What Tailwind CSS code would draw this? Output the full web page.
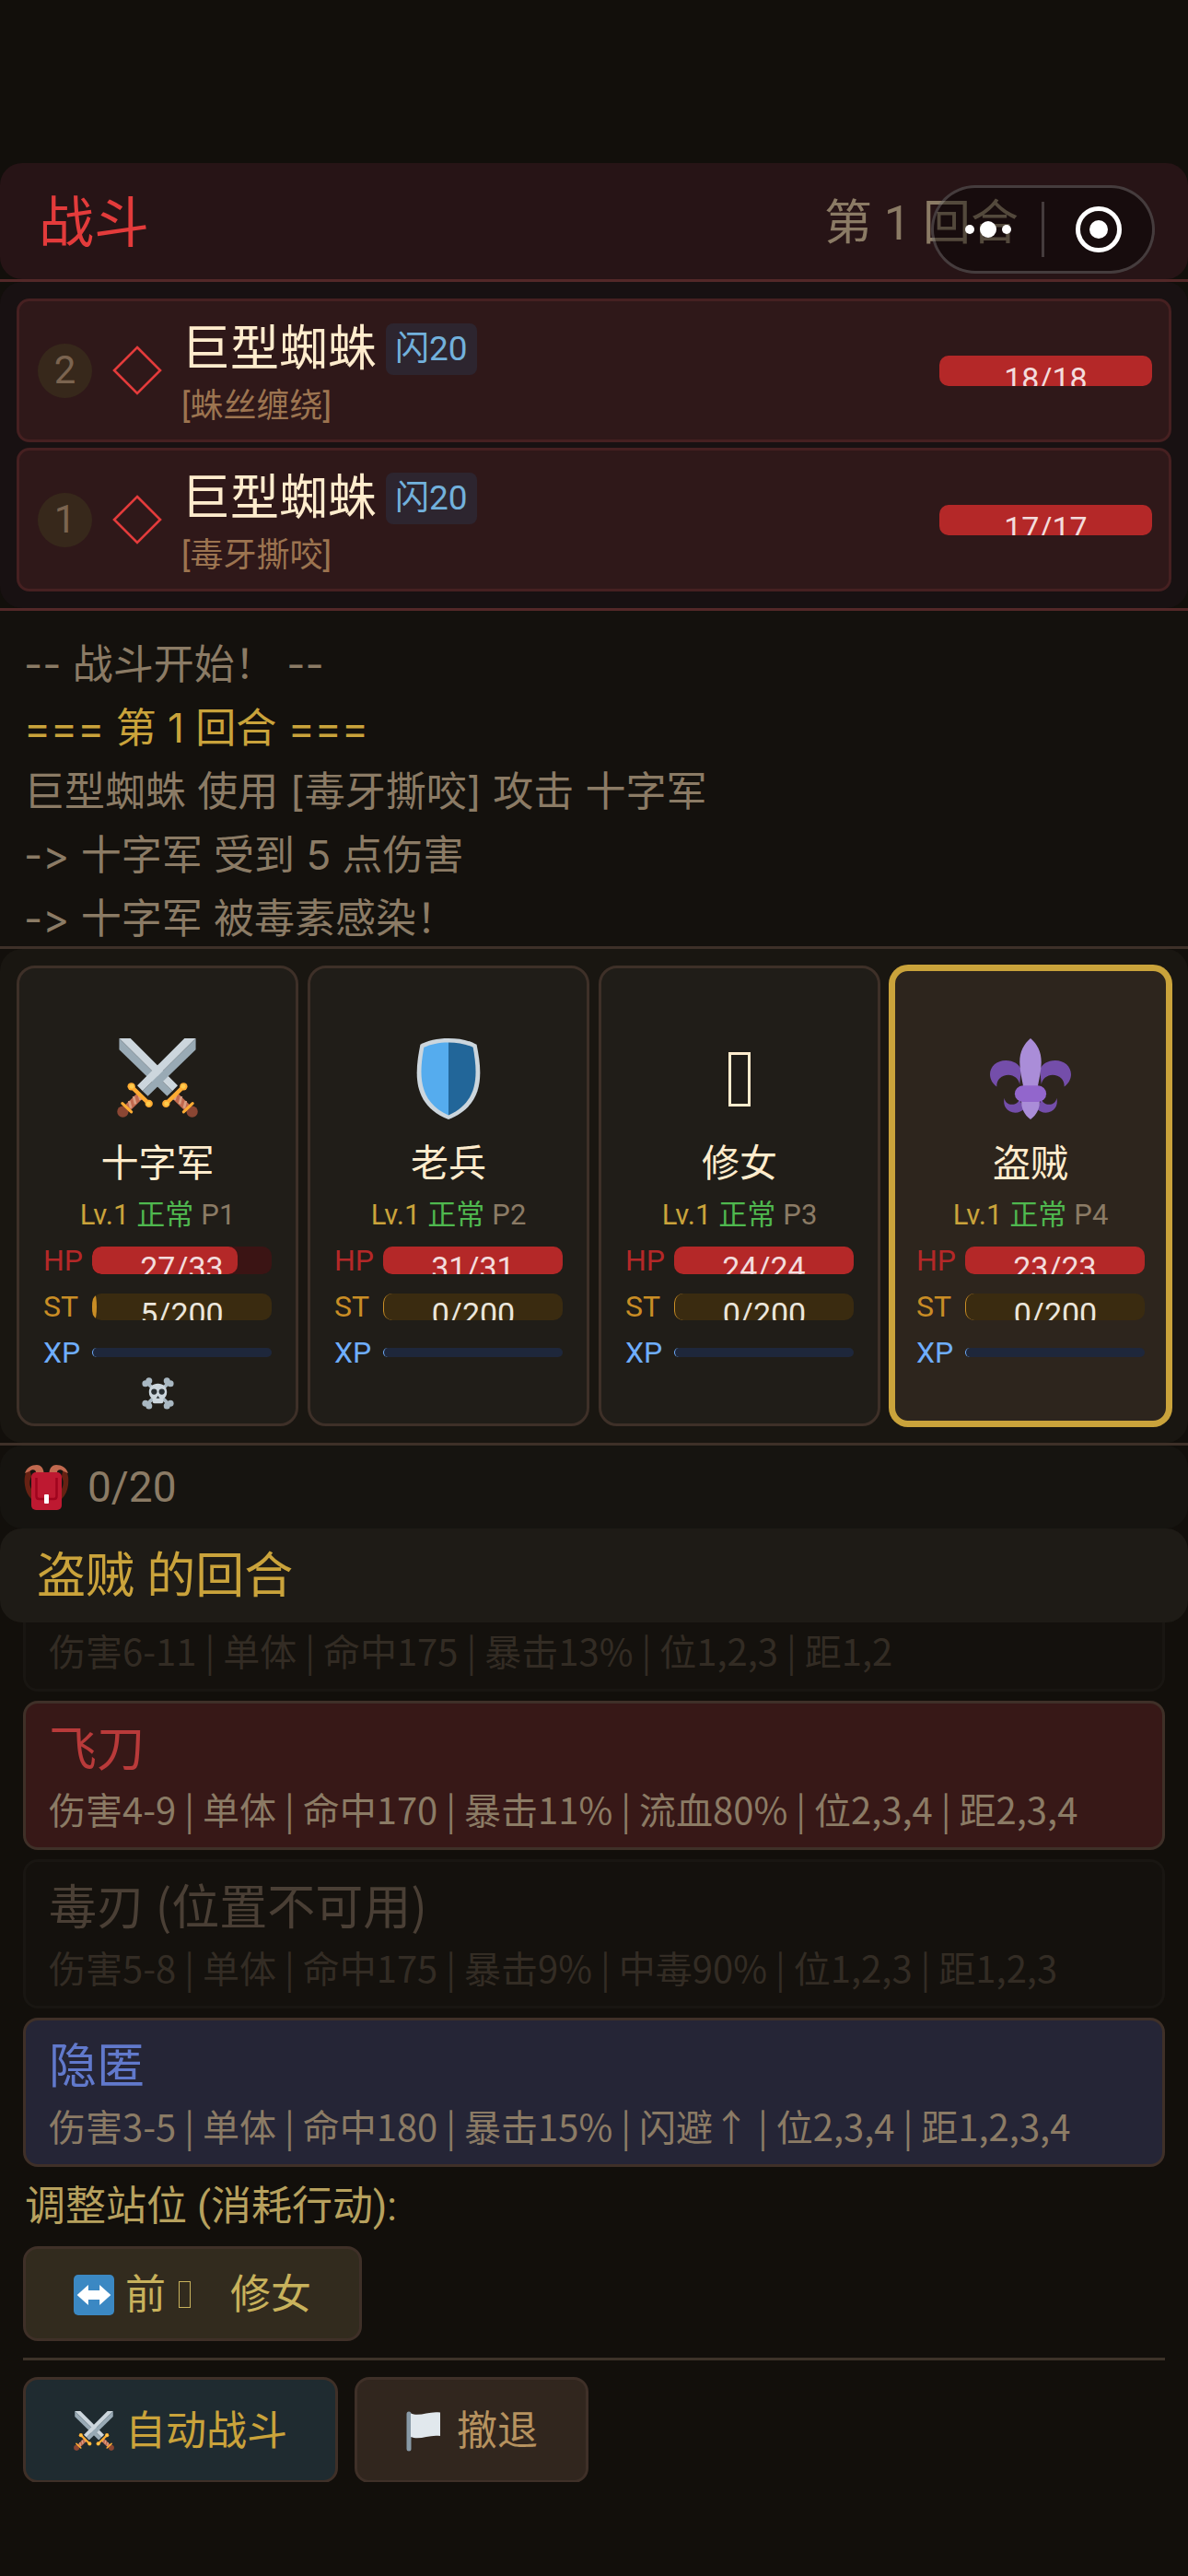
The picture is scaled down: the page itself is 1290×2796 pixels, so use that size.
<!DOCTYPE html>
<html lang="zh-CN">
<head>
    <meta charset="UTF-8">
    <meta name="viewport" content="width=device-width, initial-scale=1.0">
    <title>战斗</title>
    <!-- Tailwind CSS -->
    <script src="https://cdn.jsdelivr.net/npm/@tailwindcss/browser@4"></script>
    <style>
        body { font-family: Roboto, 'Noto Sans CJK SC', sans-serif; }
        .log { font-family: Inter, 'Noto Sans CJK SC', sans-serif; font-variant-ligatures: none; }
        .skill { font-family: 'Noto Sans CJK SC', sans-serif; }
    </style>
</head>
<body class="bg-[#120f0b] text-[#8b7b65]">

    <!-- 图标 -->
    <svg class="hidden">
        <defs>
            <g id="sword">
                <path fill="#ccd6dd" d="M30 0h5L11.4 23.4 9 21z"/>
                <path fill="#99aab5" d="M35 0v5L13.7 25.7 11.4 23.4z"/>
                <path stroke="#c1694f" stroke-width="3.4" d="M10.6 25.2 4.2 31.4"/>
                <path stroke="#d99e82" stroke-width="1.1" d="M9.6 24.2l.8 3.2M7.4 25.8l.8 3.4M5.4 27.8l.8 3.2"/>
                <circle cx="2.6" cy="32.6" r="2.5" fill="#8a4633"/>
                <path stroke="#ffac33" stroke-width="1.3" stroke-linecap="round" d="M2.4 28.9l4 3.8"/>
                <path stroke="#ffac33" stroke-width="1.8" d="M6.4 21.4l7.8 7.6"/>
                <circle cx="6.4" cy="21.4" r="1.7" fill="#ffac33"/>
                <circle cx="14.2" cy="29" r="1.7" fill="#ffac33"/>
                <circle cx="6.6" cy="21.4" r="1" fill="#ffcc4d"/>
                <circle cx="14" cy="29" r="1" fill="#ffcc4d"/>
            </g>
            <symbol id="swords" viewBox="0 0 36 36">
                <use href="#sword" transform="matrix(-1 0 0 1 36 0)"/>
                <use href="#sword"/>
            </symbol>
        </defs>
    </svg>

    <div class="h-screen flex flex-col pt-[177px] pb-[102px] overflow-hidden">

        <!-- 标题栏 -->
        <header class="relative shrink-0 border-b-[3px] border-[#532828]">
            <div class="h-[126px] rounded-3xl bg-[#271416] flex items-center justify-between pt-[6px] pl-[42px] pr-[184px]">
                <h1 class="text-[60px] leading-none text-[#e33b3b]">战斗</h1>
                <span class="text-[52px] leading-none">第 1 回合</span>
            </div>
            <!-- 小程序胶囊按钮 -->
            <div class="absolute top-6 right-9 w-[243px] h-24 rounded-full border-[3px] border-white/20 bg-black/40 flex items-center">
                <button class="flex-1 flex justify-center" aria-label="更多">
                    <svg class="w-[50px] h-[18px]" viewBox="0 0 50 18" fill="#fff">
                        <circle cx="5" cy="9" r="5"/><circle cx="25" cy="9" r="9"/><circle cx="45" cy="9" r="5"/>
                    </svg>
                </button>
                <span class="w-[3px] h-[60px] bg-white/20"></span>
                <button class="flex-1 flex justify-center" aria-label="关闭">
                    <svg class="w-[50px] h-[50px]" viewBox="0 0 50 50" fill="#fff">
                        <circle cx="25" cy="25" r="22.5" fill="none" stroke="#fff" stroke-width="5"/><circle cx="25" cy="25" r="10"/>
                    </svg>
                </button>
            </div>
        </header>

        <!-- 敌人 -->
        <section class="shrink-0 border-b-[3px] border-[#532828]">
            <ul class="rounded-3xl bg-[#181112] p-[18px] space-y-[6px]">
                <li class="h-[156px] rounded-[14px] border-[3px] border-[#462021] bg-[#2f1819] flex items-center pl-5 pr-[18px]">
                    <span class="w-[59px] h-[59px] rounded-full bg-[#37281b] flex items-center justify-center text-[42px] leading-none text-[#7b6450]">2</span>
                    <svg class="w-[54px] h-[54px] ml-[22px]" viewBox="0 0 54 54" fill="none" stroke="#e33b3b" stroke-width="2.6"><path d="M27 2l25 25-25 25L2 27z"/></svg>
                    <div class="flex-1 ml-[21px] pt-[6px]">
                        <div class="flex items-center gap-[10px]">
                            <span class="text-[53px] leading-[72px] text-[#ffeccd]">巨型蜘蛛</span>
                            <span class="h-14 px-[10px] rounded-lg bg-[#2d252f] text-[37px] leading-[56px] text-[#72b1dc]">闪20</span>
                        </div>
                        <div class="text-[36px] leading-[52px] text-[#9c7450]">[蛛丝缠绕]</div>
                    </div>
                    <div class="w-[231px] h-[33px] rounded-[10px] bg-[#b42828] overflow-hidden text-center text-[34px] leading-[50px] text-[#f3dcdc]">18/18</div>
                </li>
                <li class="h-[156px] rounded-[14px] border-[3px] border-[#462021] bg-[#2f1819] flex items-center pl-5 pr-[18px]">
                    <span class="w-[59px] h-[59px] rounded-full bg-[#37281b] flex items-center justify-center text-[42px] leading-none text-[#7b6450]">1</span>
                    <svg class="w-[54px] h-[54px] ml-[22px]" viewBox="0 0 54 54" fill="none" stroke="#e33b3b" stroke-width="2.6"><path d="M27 2l25 25-25 25L2 27z"/></svg>
                    <div class="flex-1 ml-[21px] pt-[6px]">
                        <div class="flex items-center gap-[10px]">
                            <span class="text-[53px] leading-[72px] text-[#ffeccd]">巨型蜘蛛</span>
                            <span class="h-14 px-[10px] rounded-lg bg-[#2d252f] text-[37px] leading-[56px] text-[#72b1dc]">闪20</span>
                        </div>
                        <div class="text-[36px] leading-[52px] text-[#9c7450]">[毒牙撕咬]</div>
                    </div>
                    <div class="w-[231px] h-[33px] rounded-[10px] bg-[#b42828] overflow-hidden text-center text-[34px] leading-[50px] text-[#f3dcdc]">17/17</div>
                </li>
            </ul>
        </section>

        <!-- 战斗日志 -->
        <section class="log shrink-0 h-[367px] pt-6 px-[26px] overflow-hidden border-b-[3px] border-[#3e3028] bg-[#14110d] text-[44px] leading-[69px]">
            <p>-- 战斗开始！ --</p>
            <p class="text-[#caa33b]">=== 第 1 回合 ===</p>
            <p>巨型蜘蛛 使用 [毒牙撕咬] 攻击 十字军</p>
            <p>-&gt; 十字军 受到 5 点伤害</p>
            <p>-&gt; 十字军 被毒素感染！</p>
        </section>

        <!-- 队伍 -->
        <section class="shrink-0 border-b-[3px] border-[#3e3028]">
            <div class="h-[536px] rounded-3xl bg-[#191611] p-[18px] grid grid-cols-4 gap-[10px]">

                <div class="rounded-[20px] border-[3px] border-[#3e3028] bg-[#201d18] px-[26px] pt-[76px]">
                    <svg class="w-[88px] h-[88px] mx-auto"><use href="#swords"/></svg>
                    <div class="mt-[18px] text-center text-[41px] leading-[60px] text-[#ffeccd]">十字军</div>
                    <div class="mt-1 flex justify-center gap-2 text-[31px] leading-[44px]"><span class="text-[#caa33b]">Lv.1</span><span class="text-[#4fb84f]">正常</span><span>P1</span></div>
                    <div class="mt-[2px] text-[32px] leading-[50px]">
                        <div class="flex items-center h-[50px]">
                            <span class="w-[53px] text-[#b42828]">HP</span>
                            <div class="relative flex-1 h-[30px] rounded-[10px] bg-[#3b1414] overflow-hidden">
                                <div class="h-full rounded-[10px] bg-[#b42828]" style="width: 81%"></div>
                                <span class="absolute inset-0 text-center text-[34px] leading-[46px] text-[#f3dcdc]">27/33</span>
                            </div>
                        </div>
                        <div class="flex items-center h-[50px]">
                            <span class="w-[53px] text-[#c98d25]">ST</span>
                            <div class="relative flex-1 h-[29px] rounded-[10px] bg-[#3a2b10] overflow-hidden">
                                <div class="h-full rounded-[50%] bg-[#c98d25]" style="width: 2.5%"></div>
                                <span class="absolute inset-0 text-center text-[34px] leading-[44px] text-[#ebe6dc]">5/200</span>
                            </div>
                        </div>
                        <div class="flex items-center h-[50px]">
                            <span class="w-[53px] text-[#6faeff]">XP</span>
                            <div class="flex-1 h-[10px] rounded-[6px] border-l border-[#6faeff] bg-[#1e273b]"></div>
                        </div>
                    </div>
                    <svg class="w-[35px] h-[35px] mx-auto mt-[2px]" viewBox="0 0 36 36">
                        <g fill="#a9b8c2">
                            <path d="M5 5l26 26M31 5L5 31" stroke="#a9b8c2" stroke-width="4"/>
                            <circle cx="4" cy="7" r="3.6"/><circle cx="8" cy="3.8" r="3.6"/><circle cx="32" cy="7" r="3.6"/><circle cx="28" cy="3.8" r="3.6"/>
                            <circle cx="4" cy="29" r="3.6"/><circle cx="8" cy="32" r="3.6"/><circle cx="32" cy="29" r="3.6"/><circle cx="28" cy="32" r="3.6"/>
                        </g>
                        <path fill="#ccd6dd" d="M18 7c6 0 10 4 10 9.500 0 4-1.500 6-4 7.500V27c0 1.500-1 2-2 2H14c-1 0-2-.5-2-2v-3c-2.500-1.500-4-3.500-4-7.500C8 11 12 7 18 7z"/>
                        <circle cx="13.700" cy="16" r="3.200" fill="#292f33"/><circle cx="22.300" cy="16" r="3.200" fill="#292f33"/>
                        <path fill="#292f33" d="M18 20.500l2 3h-4z"/>
                    </svg>
                </div>

                <div class="rounded-[20px] border-[3px] border-[#3e3028] bg-[#201d18] px-[26px] pt-[76px]">
                    <svg class="w-[88px] h-[88px] mx-auto" viewBox="0 0 36 36">
                        <path fill="#ccd6dd" d="M18 0c5 0 9.500 1 12.500 2.800C33 15 34.500 29.500 18 36 1.500 29.500 3 15 5.500 2.800 8.500 1 13 0 18 0z"/>
                        <path fill="#55acee" d="M18 1.800c-4.300 0-8 .8-10.900 2.200C5 15.500 4.200 28 18 34.200z"/>
                        <path fill="#226699" d="M18 1.800c4.300 0 8 .8 10.900 2.200C31 15.500 31.800 28 18 34.200z"/>
                    </svg>
                    <div class="mt-[18px] text-center text-[41px] leading-[60px] text-[#ffeccd]">老兵</div>
                    <div class="mt-1 flex justify-center gap-2 text-[31px] leading-[44px]"><span class="text-[#caa33b]">Lv.1</span><span class="text-[#4fb84f]">正常</span><span>P2</span></div>
                    <div class="mt-[2px] text-[32px] leading-[50px]">
                        <div class="flex items-center h-[50px]">
                            <span class="w-[53px] text-[#b42828]">HP</span>
                            <div class="flex-1 h-[30px] rounded-[10px] bg-[#b42828] overflow-hidden text-center text-[34px] leading-[46px] text-[#f3dcdc]">31/31</div>
                        </div>
                        <div class="flex items-center h-[50px]">
                            <span class="w-[53px] text-[#c98d25]">ST</span>
                            <div class="flex-1 h-[29px] rounded-[10px] border-l border-[#c98d25] bg-[#3a2b10] overflow-hidden text-center text-[34px] leading-[44px] text-[#ebe6dc]">0/200</div>
                        </div>
                        <div class="flex items-center h-[50px]">
                            <span class="w-[53px] text-[#6faeff]">XP</span>
                            <div class="flex-1 h-[10px] rounded-[6px] border-l border-[#6faeff] bg-[#1e273b]"></div>
                        </div>
                    </div>
                </div>

                <div class="rounded-[20px] border-[3px] border-[#3e3028] bg-[#201d18] px-[26px] pt-[76px]">
                    <div class="h-[88px] flex items-center justify-center"><span class="w-6 h-[59px] border-[3px] border-[#ffeccd]"></span></div>
                    <div class="mt-[18px] text-center text-[41px] leading-[60px] text-[#ffeccd]">修女</div>
                    <div class="mt-1 flex justify-center gap-2 text-[31px] leading-[44px]"><span class="text-[#caa33b]">Lv.1</span><span class="text-[#4fb84f]">正常</span><span>P3</span></div>
                    <div class="mt-[2px] text-[32px] leading-[50px]">
                        <div class="flex items-center h-[50px]">
                            <span class="w-[53px] text-[#b42828]">HP</span>
                            <div class="flex-1 h-[30px] rounded-[10px] bg-[#b42828] overflow-hidden text-center text-[34px] leading-[46px] text-[#f3dcdc]">24/24</div>
                        </div>
                        <div class="flex items-center h-[50px]">
                            <span class="w-[53px] text-[#c98d25]">ST</span>
                            <div class="flex-1 h-[29px] rounded-[10px] border-l border-[#c98d25] bg-[#3a2b10] overflow-hidden text-center text-[34px] leading-[44px] text-[#ebe6dc]">0/200</div>
                        </div>
                        <div class="flex items-center h-[50px]">
                            <span class="w-[53px] text-[#6faeff]">XP</span>
                            <div class="flex-1 h-[10px] rounded-[6px] border-l border-[#6faeff] bg-[#1e273b]"></div>
                        </div>
                    </div>
                </div>

                <!-- 当前行动者 -->
                <div class="rounded-[20px] border-[6px] border-[#caa33b] shadow-[0_0_0_1px_#caa33b] bg-[#2d251d] px-[23px] pt-[73px]">
                    <svg class="w-[88px] h-[88px] mx-auto" viewBox="0 0 36 36">
                        <path fill="#744eaa" d="M13.200 20.500c-.5-2.500-2.500-4.200-5-4.200-3 0-5.400 2-5.200 5.200C1.200 20.300 0 18.200 0 16c0-3.500 3-6.200 7-6.200 3.500 0 6 1.700 6.800 4.200zM22.800 20.500c.5-2.500 2.500-4.200 5-4.200 3 0 5.400 2 5.200 5.200 1.800-1.200 3-3.300 3-5.500 0-3.500-3-6.200-7-6.200-3.500 0-6 1.700-6.800 4.200z"/>
                        <path fill="#744eaa" d="M13 27c-.3 1.500-1.600 2.400-3.200 2.400-1.800 0-3.200-1-3.400-2.900-.9 3.400 1.200 6.500 4.800 6.500 1.600 0 3-.6 4-1.700zM23 27c.3 1.500 1.600 2.400 3.200 2.400 1.800 0 3.200-1 3.400-2.900.9 3.400-1.200 6.500-4.800 6.500-1.600 0-3-.6-4-1.700z"/>
                        <path fill="#aa8dd8" d="M18 0c3 2.500 4.800 6 4.800 10.500 0 4-1 7.500-1.600 11h-6.400c-.6-3.500-1.600-7-1.600-11C13.200 6 15 2.500 18 0zM14 27.500h8c.3 3.500-1.300 6.500-4 8.500-2.700-2-4.300-5-4-8.500z"/>
                        <rect x="11" y="21" width="14" height="7.200" rx="3.600" fill="#9266cc"/>
                    </svg>
                    <div class="mt-[18px] text-center text-[41px] leading-[60px] text-[#ffeccd]">盗贼</div>
                    <div class="mt-1 flex justify-center gap-2 text-[31px] leading-[44px]"><span class="text-[#caa33b]">Lv.1</span><span class="text-[#4fb84f]">正常</span><span>P4</span></div>
                    <div class="mt-[2px] text-[32px] leading-[50px]">
                        <div class="flex items-center h-[50px]">
                            <span class="w-[53px] text-[#b42828]">HP</span>
                            <div class="flex-1 h-[30px] rounded-[10px] bg-[#b42828] overflow-hidden text-center text-[34px] leading-[46px] text-[#f3dcdc]">23/23</div>
                        </div>
                        <div class="flex items-center h-[50px]">
                            <span class="w-[53px] text-[#c98d25]">ST</span>
                            <div class="flex-1 h-[29px] rounded-[10px] border-l border-[#c98d25] bg-[#3a2b10] overflow-hidden text-center text-[34px] leading-[44px] text-[#ebe6dc]">0/200</div>
                        </div>
                        <div class="flex items-center h-[50px]">
                            <span class="w-[53px] text-[#6faeff]">XP</span>
                            <div class="flex-1 h-[10px] rounded-[6px] border-l border-[#6faeff] bg-[#1e273b]"></div>
                        </div>
                    </div>
                </div>
            </div>
        </section>

        <!-- 背包 -->
        <div class="shrink-0 h-[90px] rounded-3xl bg-[#161410] flex items-center gap-5 px-[26px]">
            <svg class="w-[49px] h-[49px]" viewBox="0 0 49 49">
                <path fill="#662113" d="M6 3C1 8 0 14 1 22c.8 6 3 11 7 15V12zM43 3c5 5 6 11 5 19-.8 6-3 11-7 15V12z"/>
                <path fill="#161410" d="M8 13c-2 4-2.500 8 0 13zM41 13c2 4 2.500 8 0 13z"/>
                <path fill="#c1694f" d="M1 9C3 3 8 0 14 0c4 0 7 3 7.500 8H13c0-3-4-4-7-1zM48 9c-2-6-7-9-13-9-4 0-7 3-7.500 8H36c0-3 4-4 7-1z"/>
                <rect x="8" y="8" width="33" height="41" rx="5" fill="#be1931"/>
                <path fill="none" stroke="#a0041e" stroke-width="2.500" d="M13.500 14v20c0 2 1 3 3 3h16c2 0 3-1 3-3V14"/>
                <rect x="22" y="32" width="5" height="10" rx="1" fill="#fff"/>
            </svg>
            <span class="text-[46px] leading-none">0/20</span>
        </div>

        <h2 class="shrink-0 h-[102px] rounded-3xl bg-[#1e1b16] px-10 text-[53px] leading-[104px] text-[#caa33b]">盗贼 的回合</h2>

        <!-- 技能与行动 -->
        <section class="flex-1 min-h-0 overflow-hidden px-[25px]">
            <div class="skill space-y-[10px]">
                <button disabled class="block w-full h-[75px] rounded-b-2xl border-[3px] border-t-0 border-[#191612] bg-[#14110d] px-[25px] pb-3 text-left">
                    <span class="block text-[40px] leading-[58px] text-[#332c24]">伤害6-11 | 单体 | 命中175 | 暴击13% | 位1,2,3 | 距1,2</span>
                </button>
                <button class="block w-full h-[162px] rounded-2xl border-[3px] border-[#3f3028] bg-[#371817] px-[25px] text-left">
                    <span class="block mb-[6px] text-[52px] leading-[66px] text-[#b93a3a]">飞刀</span>
                    <span class="block text-[40px] leading-[58px]">伤害4-9 | 单体 | 命中170 | 暴击11% | 流血80% | 位2,3,4 | 距2,3,4</span>
                </button>
                <button disabled class="block w-full h-[162px] rounded-2xl border-[3px] border-[#191612] bg-[#14110d] px-[25px] text-left">
                    <span class="block mb-[6px] text-[52px] leading-[66px] text-[#4a3f35]">毒刃 (位置不可用)</span>
                    <span class="block text-[40px] leading-[58px] text-[#332c24]">伤害5-8 | 单体 | 命中175 | 暴击9% | 中毒90% | 位1,2,3 | 距1,2,3</span>
                </button>
                <button class="block w-full h-[162px] rounded-2xl border-[3px] border-[#3f3028] bg-[#252536] px-[25px] text-left">
                    <span class="block mb-[6px] text-[52px] leading-[66px] text-[#6179cc]">隐匿</span>
                    <span class="block text-[40px] leading-[58px]">伤害3-5 | 单体 | 命中180 | 暴击15% | 闪避↑ | 位2,3,4 | 距1,2,3,4</span>
                </button>
            </div>

            <p class="mt-[10px] pl-[2px] text-[44px] leading-[66px] text-[#b7a15e]">调整站位 (消耗行动):</p>

            <button class="mt-[10px] h-[103px] rounded-2xl border-[3px] border-[#3f3028] bg-[#322b1e] px-[52px] pt-[2px] flex items-center text-[44px] leading-none text-[#c8b25c]">
                <svg class="w-11 h-11 mr-3" viewBox="0 0 36 36">
                    <rect width="36" height="36" rx="4" fill="#3b88c3"/>
                    <path fill="#fff" d="M3 18l10-9v5h10V9l10 9-10 9v-5H13v5z"/>
                </svg>
                前
                <span class="w-[13px] h-[29px] ml-[14px] mr-[43px] border border-[#c8b25c]"></span>
                修女
            </button>

            <div class="mt-[18px] border-t-[3px] border-[#3d3329] pt-[18px] flex gap-[18px]">
                <button class="h-[115px] rounded-2xl border-[3px] border-[#3f3028] bg-[#1f2b30] px-[52px] pt-[2px] flex items-center gap-3 text-[44px] leading-none text-[#caa33b]">
                    <svg class="w-11 h-11"><use href="#swords"/></svg>
                    自动战斗
                </button>
                <button class="h-[115px] rounded-2xl border-[3px] border-[#3f3028] bg-[#31261e] px-[52px] pt-[2px] flex items-center gap-3 text-[44px] leading-none text-[#b6925f]">
                    <svg class="w-11 h-11" viewBox="0 0 44 44">
                        <path stroke="#8899a6" stroke-width="5" stroke-linecap="round" d="M4 3v38"/>
                        <path fill="#e1e8ed" d="M6 2.500c10 4 20-3 32-1V27c-12-2-22 5-32 1z"/>
                    </svg>
                    撤退
                </button>
            </div>
        </section>
    </div>

</body>
</html>
